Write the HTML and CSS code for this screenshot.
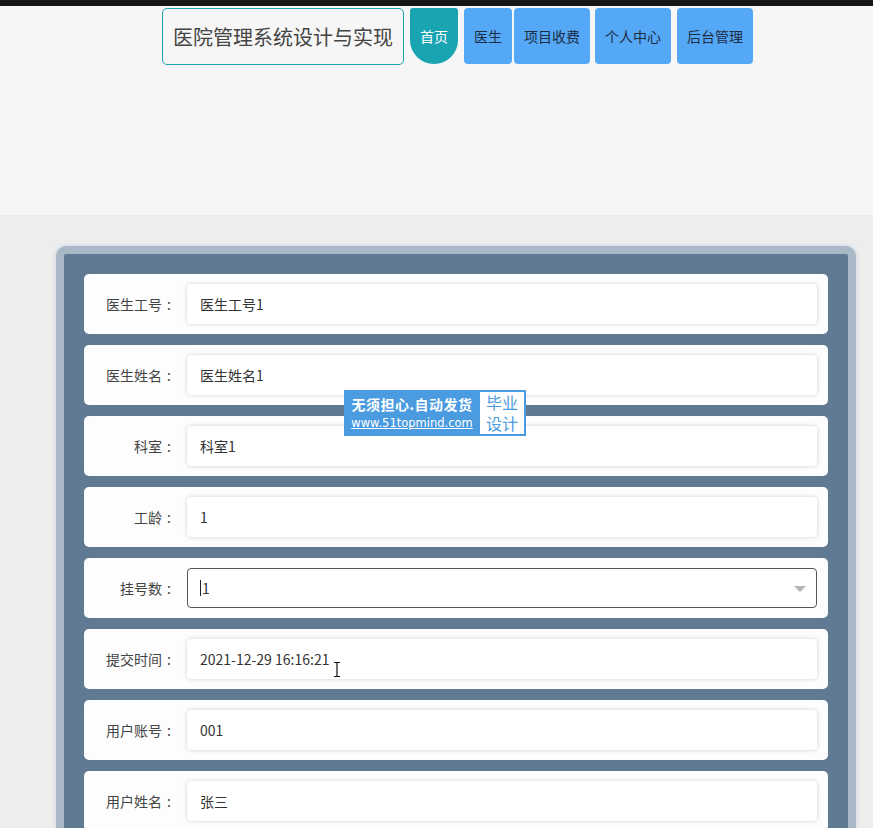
FILE: index.html
```html
<!DOCTYPE html>
<html lang="zh-CN">
<head>
    <meta charset="UTF-8">
    <title>医院管理系统设计与实现</title>
    <link rel="stylesheet" href="styles.css">
</head>
<body>
    <div class="topbar"></div>
    <div class="header">
        <div class="nav">
            <div class="title">医院管理系统设计与实现</div>
            <a class="nav-btn home" href="#">首页</a>
            <a class="nav-btn w48 first" href="#">医生</a>
            <a class="nav-btn w76 tight" href="#">项目收费</a>
            <a class="nav-btn w76 mid" href="#">个人中心</a>
            <a class="nav-btn w76" href="#">后台管理</a>
        </div>
    </div>

    <div class="main">
        <div class="panel">
            <div class="row">
                <label>医生工号<span class="colon">:</span></label>
                <input class="field" type="text" value="医生工号1">
            </div>
            <div class="row">
                <label>医生姓名<span class="colon">:</span></label>
                <input class="field" type="text" value="医生姓名1">
            </div>
            <div class="row">
                <label>科室<span class="colon">:</span></label>
                <input class="field" type="text" value="科室1">
            </div>
            <div class="row">
                <label>工龄<span class="colon">:</span></label>
                <input class="field" type="text" value="1">
            </div>
            <div class="row">
                <label>挂号数<span class="colon">:</span></label>
                <div class="field select">
                    <span class="caret"></span>1
                    <span class="arrow"></span>
                </div>
            </div>
            <div class="row">
                <label>提交时间<span class="colon">:</span></label>
                <input class="field" type="text" value="2021-12-29 16:16:21">
            </div>
            <div class="row">
                <label>用户账号<span class="colon">:</span></label>
                <input class="field" type="text" value="001">
            </div>
            <div class="row">
                <label>用户姓名<span class="colon">:</span></label>
                <input class="field" type="text" value="张三">
            </div>
            <div class="row">
                <label>审核回复<span class="colon">:</span></label>
                <input class="field" type="text" value="">
            </div>
        </div>
    </div>

    <!-- 水印 -->
    <div class="stamp">
        <div class="stamp-left">
            <div class="stamp-title">无须担心.自动发货</div>
            <div class="stamp-url">www.51topmind.com</div>
        </div>
        <div class="stamp-right">
            <div>毕业</div>
            <div>设计</div>
        </div>
    </div>

    <svg class="ibeam" width="8" height="15" viewBox="0 0 8 15">
        <path d="M1 0.5h6M4 0.5v14M1 14.5h6" stroke="#111" stroke-width="1.2" fill="none"/>
    </svg>
</body>
</html>
```

FILE: styles.css
```css
body {
    margin: 0;
    font-family: "Noto Sans CJK SC", "Microsoft YaHei", sans-serif;
    background-color: #ededed;
    color: #333;
}

.topbar {
    height: 6px;
    background-color: #151515;
}

.header {
    height: 209px;
    background-color: #f6f6f6;
}

.nav {
    display: flex;
    padding: 2px 0 0 162px;
}

.title {
    width: 240px;
    height: 55px;
    border: 1px solid #1aa3ab;
    border-radius: 5px;
    font-size: 20px;
    color: #444;
    display: flex;
    align-items: center;
    justify-content: center;
}

.nav-btn {
    height: 56px;
    display: flex;
    align-items: center;
    justify-content: center;
    font-size: 14px;
    color: #1c2c44;
    text-decoration: none;
    background-color: #55a8f5;
    border-radius: 4px;
    margin-left: 5px;
}

.nav-btn.home {
    width: 48px;
    margin-left: 6px;
    background-color: #19a4b2;
    color: #fff;
    border-radius: 3px 3px 24px 24px;
}

.nav-btn.first {
    margin-left: 6px;
}

.nav-btn.tight {
    margin-left: 2px;
}

.nav-btn.mid {
    margin-left: 5px;
}

.w48 {
    width: 48px;
}

.w76 {
    width: 76px;
    margin-left: 6px;
}

.main {
    padding: 31px 0 0 56px;
}

.panel {
    width: 744px;
    border: 8px solid #a9b8c7;
    border-radius: 10px;
    background-color: #617a93;
    padding: 20px;
    box-shadow: 0 0 4px rgba(160, 185, 215, 0.5);
}

.row {
    height: 40px;
    background-color: #fdfdfd;
    border-radius: 5px;
    padding: 10px 11px 10px 0;
    margin-bottom: 11px;
    display: flex;
    align-items: center;
}

.row label {
    width: 92px;
    padding-right: 11px;
    text-align: right;
    font-size: 14px;
    color: #444;
}

.colon {
    display: inline-block;
    width: 14px;
    text-align: center;
}

.field {
    box-sizing: border-box;
    width: 630px;
    height: 40px;
    border: none;
    border-radius: 4px;
    box-shadow: 0 0 4px rgba(0, 0, 0, 0.18);
    padding: 0 13px;
    font-family: inherit;
    font-size: 14px;
    color: #333;
    background-color: #fff;
    outline: none;
}

.select {
    border: 1px solid #555;
    box-shadow: none;
    display: flex;
    align-items: center;
    position: relative;
    padding-left: 12px;
}

.caret {
    display: inline-block;
    width: 1px;
    height: 16px;
    background-color: #222;
    margin-right: 1px;
}

.arrow {
    position: absolute;
    right: 10px;
    top: 17px;
    border-left: 6px solid transparent;
    border-right: 6px solid transparent;
    border-top: 6px solid #b5b5b5;
}

.stamp {
    position: absolute;
    left: 344px;
    top: 390px;
    display: flex;
    height: 46px;
    background-color: #4a9be0;
    padding: 0 2px 0 0;
}

.stamp-left {
    width: 136px;
    padding-top: 4px;
    text-align: center;
    color: #fff;
}

.stamp-title {
    font-size: 14px;
    font-weight: bold;
    line-height: 20px;
    letter-spacing: 0.5px;
}

.stamp-url {
    font-family: "DejaVu Sans", sans-serif;
    font-size: 11.5px;
    line-height: 18px;
    text-decoration: underline;
}

.stamp-right {
    width: 44px;
    margin: 2px 0;
    background-color: #fff;
    color: #4a9be0;
    font-size: 16px;
    line-height: 21px;
    text-align: center;
}

.ibeam {
    position: absolute;
    left: 333px;
    top: 662px;
}
```
